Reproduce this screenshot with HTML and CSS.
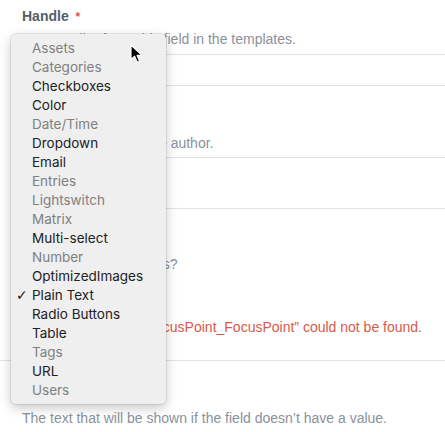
FILE: index.html
```html
<!DOCTYPE html>
<html>
<head>
<meta charset="utf-8">
<link rel="stylesheet" href="styles.css">
</head>
<body>
<div class="page">
  <div class="field f-handle">
    <div class="label">Handle <span class="req">*</span></div>
    <div class="instr">How you’ll refer to this field in the templates.</div>
    <div class="input"></div>
  </div>
  <div class="field f-instr">
    <div class="label">Instructions</div>
    <div class="instr">Helper text to guide the author.</div>
    <div class="textarea"></div>
  </div>
  <div class="field f-type">
    <div class="label">Field Type</div>
    <div class="instr">What type of field is this?</div>
    <div class="select">Plain Text</div>
    <div class="error">The fieldtype class “FocusPoint_FocusPoint” could not be found.</div>
  </div>
  <hr class="sep">
  <div class="field f-ph">
    <div class="label">Placeholder Text</div>
    <div class="instr">The text that will be shown if the field doesn’t have a value.</div>
  </div>
</div>

<ul class="menu">
  <li class="off">Assets</li>
  <li class="off">Categories</li>
  <li>Checkboxes</li>
  <li>Color</li>
  <li class="off">Date/Time</li>
  <li>Dropdown</li>
  <li>Email</li>
  <li class="off">Entries</li>
  <li class="off">Lightswitch</li>
  <li class="off">Matrix</li>
  <li>Multi-select</li>
  <li class="off">Number</li>
  <li>OptimizedImages</li>
  <li class="checked"><span class="check">✓</span>Plain Text</li>
  <li>Radio Buttons</li>
  <li>Table</li>
  <li class="off">Tags</li>
  <li>URL</li>
  <li class="off">Users</li>
</ul>

<svg class="cursor" width="14" height="20" viewBox="0 0 14 20">
  <path d="M1 1 L1 15.5 L4.6 12.2 L7.2 18.2 L9.6 17.2 L7.1 11.4 L12 11.4 Z" fill="#000" stroke="#fff" stroke-width="1.2" stroke-linejoin="round"/>
</svg>
</body>
</html>
```
FILE: styles.css
```css
html, body {
  margin: 0;
  padding: 0;
  background: #fff;
  overflow: hidden;
}
body {
  width: 445px;
  height: 432px;
  position: relative;
  font-family: "Liberation Sans", Arial, sans-serif;
  font-size: 14px;
}
.page {
  padding-left: 22px;
  overflow: hidden;
}
.field {
  display: flex;
  flex-direction: column;
}
.label {
  font-weight: bold;
  color: #545e69;
  line-height: 20px;
}
.req {
  color: #da5a47;
  font-size: 12px;
  margin-left: 3px;
}
.instr {
  color: #8a929b;
  line-height: 20px;
  margin-top: 2px;
}
.input {
  margin-top: 5px;
  height: 30px;
  border: 1px solid #e3e3e3;
  margin-right: -10px;
}
.textarea {
  margin-top: 4px;
  height: 50px;
  border: 1px solid #e3e3e3;
  margin-right: -10px;
}
.f-handle { padding-top: 6px; }
.f-instr { margin-top: 25px; }
.f-type { margin-top: 23px; }
.select {
  margin-top: 5px;
  width: 110px;
  height: 30px;
  line-height: 30px;
  color: #29323d;
}
.error {
  margin-top: 8px;
  color: #da5a47;
  line-height: 20px;
}
.sep {
  margin: 23px 0 0 -22px;
  border: 0;
  border-top: 1px solid #e3e3e3;
  height: 0;
}
.f-ph { margin-top: 25px; }

.menu {
  position: absolute;
  left: 11px;
  top: 34px;
  width: 155px;
  margin: 0;
  padding: 5px 0 4px;
  list-style: none;
  background: #efefef;
  border-radius: 5px;
  box-shadow: 0 0 0 1px rgba(0,0,0,0.08), 0 4px 12px rgba(0,0,0,0.22);
  font-family: Inter, "Liberation Sans", sans-serif;
  font-size: 13.5px;
  color: #222;
}
.menu li {
  position: relative;
  height: 19px;
  line-height: 19px;
  padding-left: 21px;
}
.menu li.off {
  color: #808080;
}
.check {
  position: absolute;
  left: 5px;
  top: 0;
  font-family: "DejaVu Sans", sans-serif;
  font-size: 14px;
  font-weight: bold;
}
.cursor {
  position: absolute;
  left: 130px;
  top: 44px;
}
```
